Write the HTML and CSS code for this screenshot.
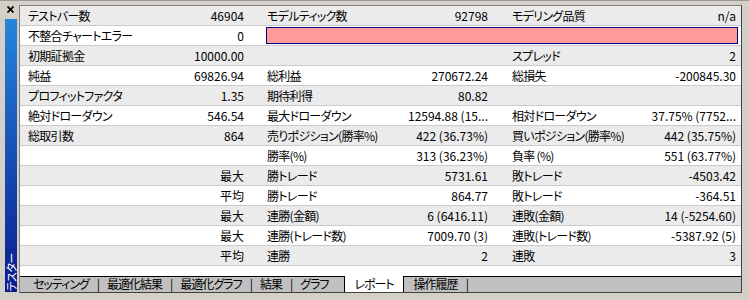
FILE: index.html
```html
<!DOCTYPE html>
<html lang="ja">
<head>
  <meta charset="UTF-8">
  <title>テスター</title>
  <link rel="stylesheet" href="styles.css">
</head>
<body>
  <div class="window">
    <!-- 左のタイトルバー -->
    <div class="side">
      <svg class="close" width="7" height="7" viewBox="0 0 7 7">
        <path d="M0.5 0.5 L6.5 6.5 M6.5 0.5 L0.5 6.5" />
      </svg>
      <div class="bar"><span class="bar-title">テスター</span></div>
    </div>

    <div class="main">
      <div class="sheet">
        <!-- レポート表 -->
        <div class="report">
          <div class="row"><span>テストバー数</span><span>46904</span><span>モデルティック数</span><span>92798</span><span>モデリング品質</span><span>n/a</span></div>
          <div class="row"><span>不整合チャートエラー</span><span>0</span><span class="bad"></span></div>
          <div class="row"><span>初期証拠金</span><span>10000.00</span><span></span><span></span><span>スプレッド</span><span>2</span></div>
          <div class="row"><span>純益</span><span>69826.94</span><span>総利益</span><span>270672.24</span><span>総損失</span><span>-200845.30</span></div>
          <div class="row"><span>プロフィットファクタ</span><span>1.35</span><span>期待利得</span><span>80.82</span><span></span><span></span></div>
          <div class="row"><span>絶対ドローダウン</span><span>546.54</span><span>最大ドローダウン</span><span>12594.88 (15...</span><span>相対ドローダウン</span><span>37.75% (7752...</span></div>
          <div class="row"><span>総取引数</span><span>864</span><span>売りポジション(勝率%)</span><span>422 (36.73%)</span><span>買いポジション(勝率%)</span><span>442 (35.75%)</span></div>
          <div class="row"><span></span><span></span><span>勝率(%)</span><span>313 (36.23%)</span><span>負率 (%)</span><span>551 (63.77%)</span></div>
          <div class="row"><span></span><span>最大</span><span>勝トレード</span><span>5731.61</span><span>敗トレード</span><span>-4503.42</span></div>
          <div class="row"><span></span><span>平均</span><span>勝トレード</span><span>864.77</span><span>敗トレード</span><span>-364.51</span></div>
          <div class="row"><span></span><span>最大</span><span>連勝(金額)</span><span>6 (6416.11)</span><span>連敗(金額)</span><span>14 (-5254.60)</span></div>
          <div class="row"><span></span><span>最大</span><span>連勝(トレード数)</span><span>7009.70 (3)</span><span>連敗(トレード数)</span><span>-5387.92 (5)</span></div>
          <div class="row"><span></span><span>平均</span><span>連勝</span><span>2</span><span>連敗</span><span>3</span></div>
        </div>
        <div class="fill"></div>

        <!-- 下部タブ -->
        <div class="tabs">
          <span class="tab">セッティング</span><span class="sep">|</span>
          <span class="tab">最適化結果</span><span class="sep">|</span>
          <span class="tab">最適化グラフ</span><span class="sep">|</span>
          <span class="tab">結果</span><span class="sep">|</span>
          <span class="tab">グラフ</span>
          <span class="tab active">レポート</span>
          <span class="tab">操作履歴</span><span class="sep">|</span>
        </div>
      </div>
    </div>
  </div>
</body>
</html>
```

FILE: styles.css
```css
/* ページ全体 */
html, body { margin: 0; padding: 0; }
body { width: 749px; height: 300px; overflow: hidden; font-family: "Noto Sans CJK JP", sans-serif; font-size: 12px; font-feature-settings: "palt"; color: #000; }

/* ウィンドウ枠 */
.window { display: flex; height: 300px; box-sizing: border-box; background: #d4d0c8; border-top: 1px solid #9a9a9a; }

/* 左のタイトルバー */
.side { width: 19px; display: flex; flex-direction: column; align-items: center; padding-top: 5px; box-sizing: border-box; }
.close { stroke: #000; stroke-width: 1.8; margin-left: 2px; margin-bottom: 6px; }
.bar { width: 12px; flex: 1; margin-bottom: 8px; margin-left: 3px; background: linear-gradient(#2586da, #0a1a8e); display: flex; align-items: flex-end; justify-content: center; }
.bar-title { writing-mode: vertical-rl; text-orientation: sideways; transform: rotate(180deg); color: #fff; font-size: 11px; line-height: 12px; padding-top: 1px; letter-spacing: -0.5px; }

/* メイン */
.main { flex: 1; display: flex; padding: 4px 7px 7px 0; }
.sheet { flex: 1; display: flex; flex-direction: column; background: #fff; border-left: 1px solid #808080; border-top: 1px solid #808080; border-right: 1px solid #404040; }

/* レポート表 */
.report { display: flex; flex-direction: column; }
.row { display: grid; grid-template-columns: 120px 112px 128px 116px 132px 113px; height: 20px; line-height: 19px; box-sizing: border-box; border-bottom: 1px solid #cbcbcb; white-space: nowrap; }
.row:nth-child(odd) { background: #ebebeb; }
.row > span { overflow: hidden; }
.row > :nth-child(odd) { letter-spacing: -0.7px; }
.row > :nth-child(1) { padding-left: 8px; }
.row > :nth-child(2) { padding-right: 8px; text-align: right; }
.row > :nth-child(3) { padding-left: 15px; }
.row > :nth-child(4) { padding-right: 8px; text-align: right; }
.row > :nth-child(5) { padding-left: 16px; }
.row > :nth-child(6) { padding-right: 5px; text-align: right; }
.row > .bad { grid-column: 3 / 7; margin: 1px 3px 1px 14px; padding: 0; background: #ff9b9b; border: 1px solid #000080; }

.fill { flex: 1; }

/* 下部タブ */
.tabs { display: flex; align-items: stretch; height: 15px; line-height: 14px; background: #c0c0c0; border-top: 1px solid #000; border-bottom: 1px solid #404040; padding-left: 6px; white-space: nowrap; }
.tab { padding: 0 8px 0 7px; letter-spacing: -1px; }
.sep { padding: 0; }
.tab.active { background: #fff; margin-top: -1px; height: 16px; line-height: 15px; padding: 0 9px; border-left: 1px solid #000; border-right: 1px solid #000; margin-left: 8px; margin-right: 3px; }
```
